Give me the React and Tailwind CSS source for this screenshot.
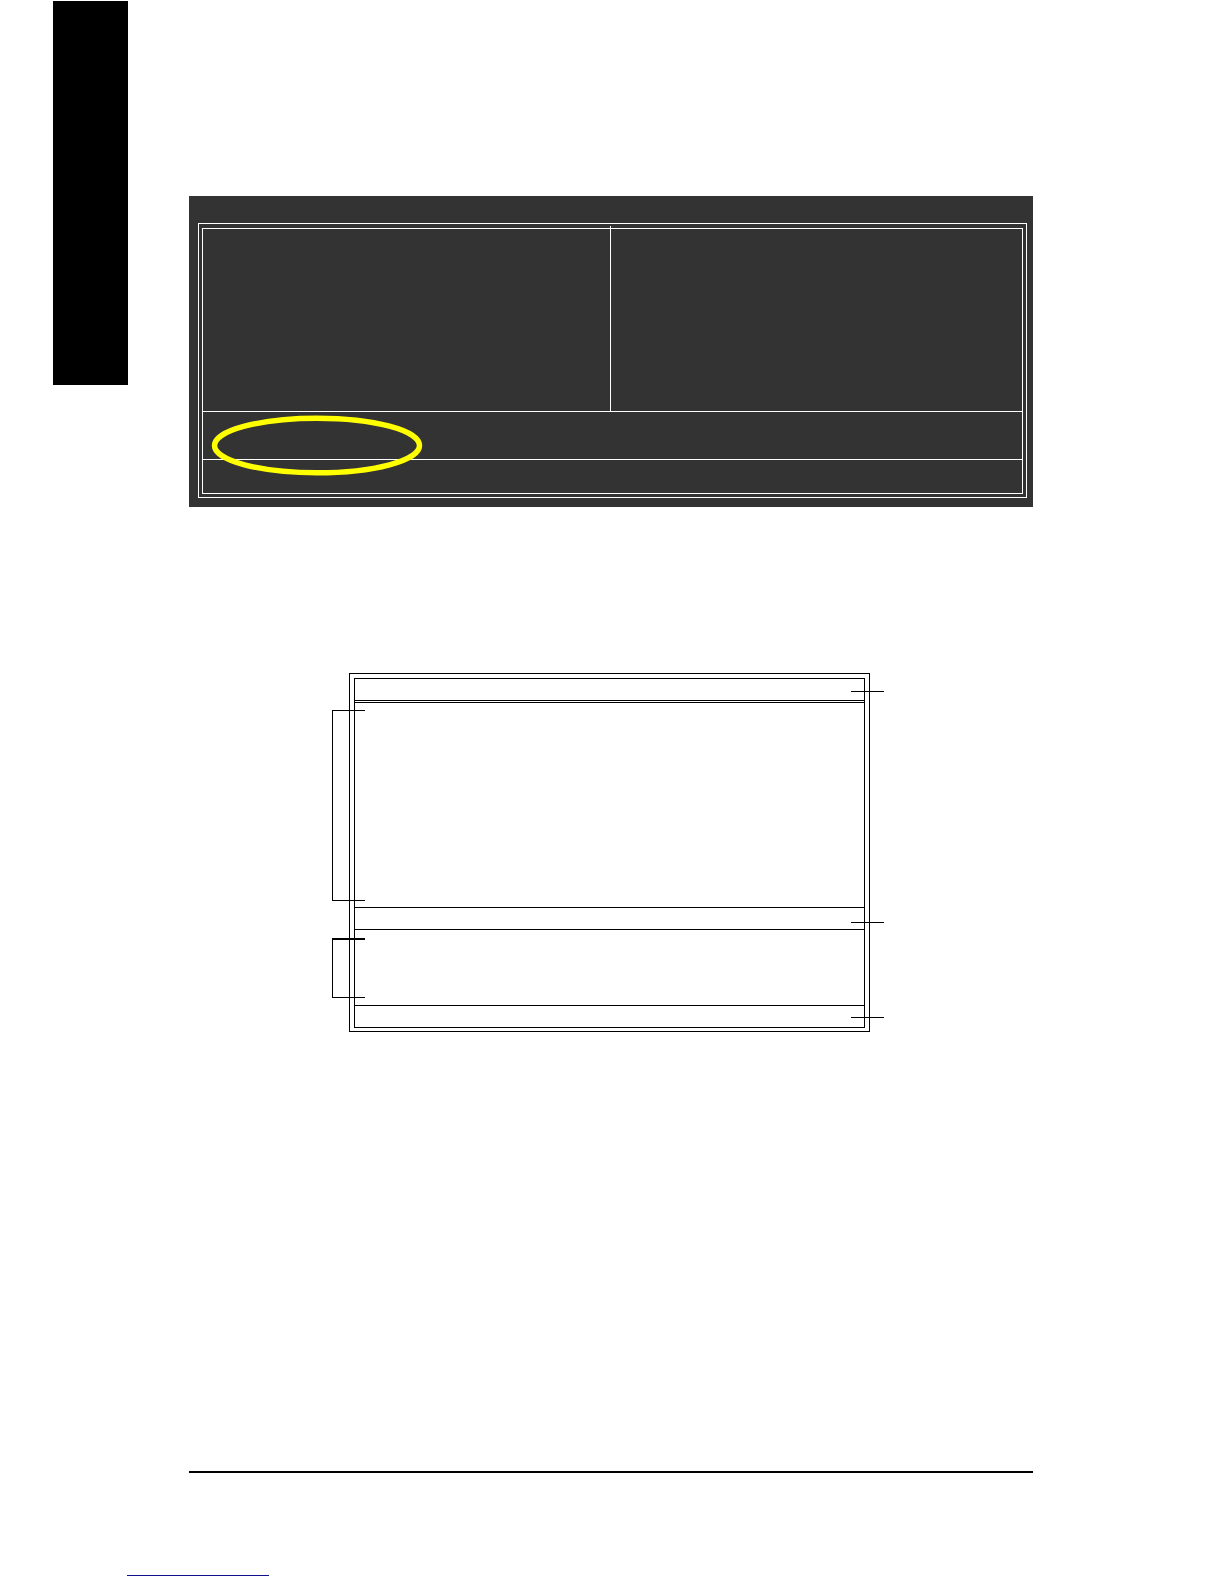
function Tick({ className }) {
  return <span className={`absolute -right-5 h-px w-[33px] bg-black ${className}`} />;
}

function Bracket({ className }) {
  return <span className={`absolute -left-[23px] w-[33px] border-y border-l border-black ${className}`} />;
}

function SetupPanel() {
  return (
    <section className="bg-[#333333] px-[9px] pt-[27px] pb-[9px] pr-[6px]">
      <div className="border border-white px-[3px] pt-1 pb-[3px]">
        <div className="border border-white">
          <div className="flex h-[183px] border-b border-white">
            <div className="flex-[407]" />
            <div className="relative w-px bg-white">
              <span className="absolute -top-[3px] h-[3px] w-px bg-white" />
            </div>
            <div className="flex-[411]" />
          </div>
          <div className="relative h-12 border-b border-white">
            <svg className="absolute left-2 top-[3px]" width="212" height="61" viewBox="0 0 212 61" fill="none">
              <ellipse cx="106" cy="30.5" rx="102.5" ry="27.3" stroke="#ffff00" strokeWidth="5.5" />
            </svg>
          </div>
          <div className="h-[33px]" />
        </div>
      </div>
    </section>
  );
}

function ScreenDiagram() {
  return (
    <section className="mt-[166px] ml-40 mr-[163px] border border-black px-1 pt-1 pb-[3px]">
      <div className="border border-black">
        <div className="relative h-[22px] border-b border-black">
          <Tick className="top-3" />
        </div>
        <div className="mt-px border-t border-black" />
        <div className="relative h-[205px] border-b border-black">
          <Bracket className="top-[7px] bottom-[6px]" />
        </div>
        <div className="relative h-[22px] border-b border-black">
          <Tick className="top-[14px]" />
        </div>
        <div className="relative h-[76px] border-b border-black">
          <Bracket className="top-2 bottom-[7px] border-t-2" />
        </div>
        <div className="relative h-[21px]">
          <Tick className="top-[11px]" />
        </div>
      </div>
    </section>
  );
}

export default function App() {
  return (
    <div className="min-h-screen bg-white font-['Liberation_Sans',sans-serif]">
      <div className="flex items-start pl-[53px] pr-[191px]">
        <aside className="mt-px h-96 w-[75px] shrink-0 bg-black" />
        <main className="ml-[61px] min-w-0 flex-1 pt-[196px]">
          <SetupPanel />
          <ScreenDiagram />
          <hr className="mt-[439px] border-t-2 border-black" />
        </main>
      </div>
      <footer className="pt-[102px] pb-2 pl-[127px]">
        <a href="#top" aria-label="Back to top" className="block h-px w-[142px] bg-[#10108c]" />
      </footer>
    </div>
  );
}
